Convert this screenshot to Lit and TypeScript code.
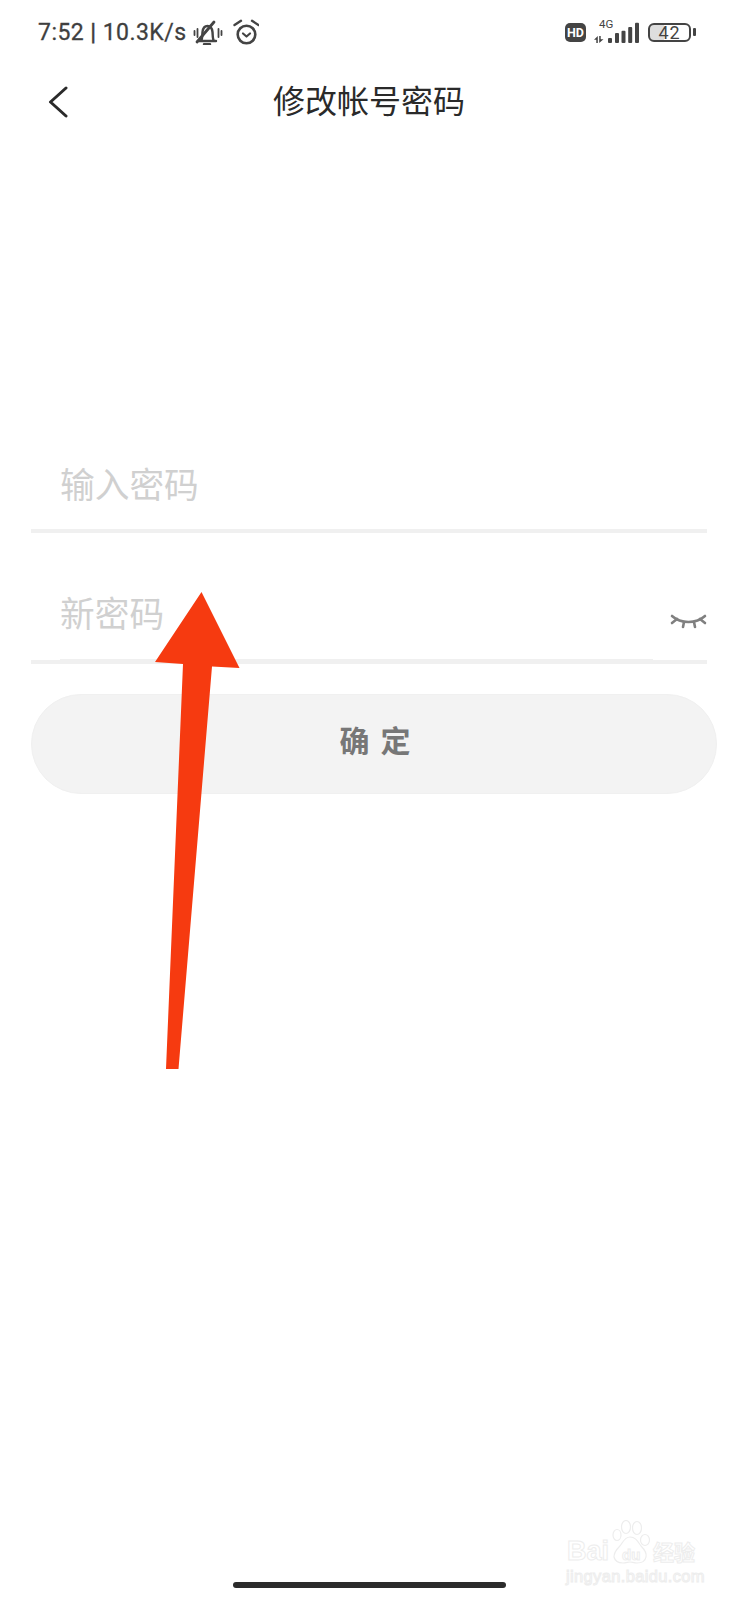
import { LitElement, html, css, svg } from "lit";
import { customElement } from "lit/decorators.js";

@customElement("app-root")
export class AppRoot extends LitElement {
  static styles = css`
    :host { display: block; width: 738px; height: 1600px; background: #fff; position: relative; overflow: hidden; font-family: "Noto Sans CJK SC", "Noto Sans", sans-serif; }
    .page { display: flex; flex-direction: column; height: 1600px; box-sizing: border-box; padding: 0 0 12px; }
    .status { display: flex; align-items: center; height: 64px; padding: 0 0 0 38px; color: #3f3f3f; box-sizing: border-box; }
    .time { font: 400 23px/26px Roboto, sans-serif; letter-spacing: 0.45px; white-space: nowrap; width: 150px; position: relative; top: 1px; -webkit-text-stroke: 0.3px #3f3f3f; }
    .pipe { font-weight: 700; }
    .bell { margin-left: 5px; }
    .alarm { margin-left: 10px; }
    .right { margin-left: auto; display: flex; align-items: center; padding-right: 42px; }
    .hd { width: 21px; height: 19px; border-radius: 5px; background: #444; color: #fff; font: 700 12.5px/19px Roboto, sans-serif; text-align: center; }
    .sig { position: relative; width: 45px; height: 28px; margin-left: 8px; }
    .sig svg { display: block; position: absolute; left: 0; top: 0; }
    .g4 { position: absolute; left: 5px; top: 0; font: 400 11.5px/13px Roboto, sans-serif; color: #444; }
    .bat { position: relative; width: 43px; height: 19px; margin-left: 9px; border: 2.5px solid #444; border-radius: 6px; box-sizing: border-box; font: 400 18px/16px Roboto, sans-serif; text-align: center; letter-spacing: 1px; color: #444; background: linear-gradient(90deg, #dedede 0 14px, #fff 14px); }
    .nub { width: 3px; height: 8px; margin-left: 2px; background: #444; border-radius: 1px; }
    .nav { position: relative; height: 74px; display: flex; align-items: center; justify-content: center; }
    .back { position: absolute; left: 47px; top: 22px; }
    .title { font-size: 32px; line-height: 44px; font-weight: 400; color: #2a2a2a; position: relative; top: -2px; }
    .form { margin-top: 314px; padding: 0 0 0 31px; display: flex; flex-direction: column; }
    .field { width: 676px; height: 131px; display: flex; align-items: flex-end; position: relative; border-bottom: 4px solid #f0f0f0; box-sizing: border-box; }
    .field.first { height: 81px; }
    .ph { font-size: 34.7px; line-height: 48px; color: #d0d0d0; margin: 0 0 22px 29px; }
    .field.second .ph { margin-bottom: 24px; }
    .eye { position: absolute; left: 639px; top: 81px; }
    .rule { position: absolute; left: 29px; width: 593px; bottom: 0; height: 1px; background: #f0f0f0; }
    .btn { margin-top: 30px; width: 686px; height: 100px; border-radius: 50px; background: #f3f3f3; box-sizing: border-box; border: 1px solid #f0f0f0; display: flex; align-items: center; justify-content: center; gap: 11px; color: #777; font-size: 30px; font-weight: 700; padding: 0 0 10px 2px; }
    .home { margin: auto auto 0; width: 273px; height: 6px; border-radius: 3px; background: #2b2b2b; }
    .arrow { position: absolute; left: 0; top: 0; pointer-events: none; }
    .wm { position: absolute; left: 566px; top: 1518px; width: 136px; height: 66px; color: #fff; pointer-events: none; }
    .wm span { position: absolute; white-space: nowrap; -webkit-text-stroke: 1px #ededed; }
    .bai { left: 1px; top: 17px; font: 700 27px/32px "Liberation Sans", sans-serif; }
    .du { left: 56px; top: 29px; font: 700 15px/16px "Liberation Sans", sans-serif; }
    .jy { left: 87px; top: 19px; font-size: 21px; line-height: 28px; font-weight: 700; }
    .url { left: 0; top: 49px; font: 400 16.5px/18px "Liberation Sans", sans-serif; letter-spacing: .35px; }
    .paw { position: absolute; left: 46px; top: 2px; }
  `;

  render() {
    return html`
      <div class="page">
        <div class="status">
          <span class="time">7:52 <span class="pipe">|</span> 10.3K/s</span>
          <svg class="bell" width="30" height="26" viewBox="0 0 30 26" fill="none" stroke="#444" stroke-width="2.4" stroke-linecap="round" stroke-linejoin="round">
            <path d="M6 22h17M8 22c1.500-2 1.200-6 1.500-9 .4-3.500 2-6 5-6s4.600 2.500 5 6c.3 3 0 7 1.500 9"/>
            <path d="M4 23 21 3" stroke-width="2.800"/><path d="M11 25.200h6" />
            <path d="M1.500 12v4M4.500 10v8M25.500 10v8M28.500 12v4" stroke-width="1.800"/>
          </svg>
          <svg class="alarm" width="26" height="26" viewBox="0 0 26 26" fill="none" stroke="#444" stroke-linecap="round" stroke-linejoin="round">
            <circle cx="13.500" cy="15.500" r="8.800" stroke-width="2.600"/>
            <path d="M10 14.500 13.500 17.500l3.500-3" stroke-width="2.200"/>
            <path d="M1.500 6 8 1.800M25.500 6 19 1.800" stroke-width="2.400"/>
          </svg>
          <div class="right">
            <div class="hd">HD</div>
            <div class="sig">
              <span class="g4">4G</span>
              ${svg`<svg width="45" height="28" viewBox="0 0 45 28" fill="#444">
                <path d="M3.800 18v7H2.300v-3.200L0 21.800zM5.200 25v-7h1.500v3.200L9.500 21.200z"/>
                <rect x="14" y="20" width="4" height="5" rx="1"/>
                <rect x="21" y="15" width="4" height="10" rx="1"/>
                <rect x="27.500" y="12.700" width="4" height="12.300" rx="1"/>
                <rect x="34.200" y="9" width="4" height="16" rx="1"/>
                <rect x="41" y="4.700" width="4" height="20.300" rx="1"/>
              </svg>`}
            </div>
            <div class="bat">42</div>
            <div class="nub"></div>
          </div>
        </div>
        <div class="nav">
          <svg class="back" width="24" height="32" viewBox="0 0 24 32" fill="none" stroke="#2a2a2a" stroke-width="3" stroke-linecap="round" stroke-linejoin="round"><path d="M19 2 3.500 16 19 30"/></svg>
          <div class="title">修改帐号密码</div>
        </div>
        <div class="form">
          <div class="field first"><span class="ph">输入密码</span></div>
          <div class="field second">
            <span class="ph">新密码</span>
            <div class="rule"></div>
            <svg class="eye" width="38" height="20" viewBox="0 0 38 20" fill="none" stroke="#808080" stroke-width="2.600" stroke-linecap="round">
              <path d="M2 2c9 8 24 8 33 0"/><path d="M2 9l5-4M35 9l-5-4M13 13l1-5M25 13l-1-5"/>
            </svg>
          </div>
          <div class="btn"><span>确</span><span>定</span></div>
        </div>
        <div class="home"></div>
      </div>
      <svg class="arrow" width="738" height="1600" viewBox="0 0 738 1600"><polygon fill="#f63a10" points="201.500,592 239.500,668 212,666.500 178.500,1069 166,1069 183,664 155,662"/></svg>
      <div class="wm">
        <svg class="paw" width="40" height="46" viewBox="0 0 40 46" fill="#fff" stroke="#ededed" stroke-width="1.200">
          <ellipse cx="5" cy="15" rx="4" ry="5.500"/><ellipse cx="14" cy="7" rx="4.500" ry="6.500"/><ellipse cx="25" cy="8" rx="4.500" ry="6.500"/><ellipse cx="33" cy="20" rx="4.500" ry="5.500"/>
          <path d="M18 17c6 0 8 5 11 9 4 4 6 7 5 11-1 5-5 6-9 6-3 0-5-1-7-1s-4 1-7 1c-4 0-8-2-9-6 0-4 2-7 5-10 4-4 5-10 11-10z"/>
        </svg>
        <span class="bai">Bai</span>
        <span class="du">du</span>
        <span class="jy">经验</span>
        <span class="url">jingyan.baidu.com</span>
      </div>
    `;
  }
}
